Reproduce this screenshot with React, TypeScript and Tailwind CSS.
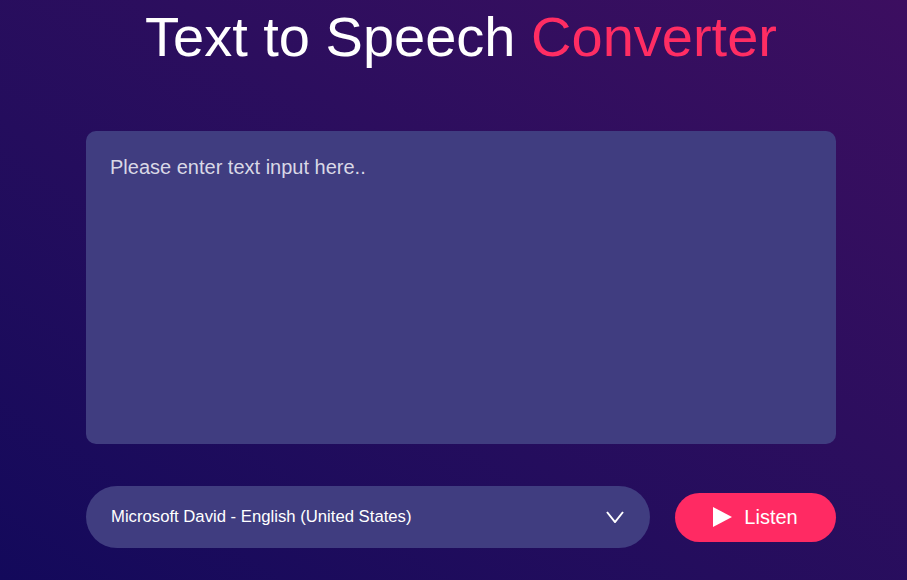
import React, { useState } from "react";

export default function App() {
  const [text, setText] = useState("");

  return (
    <div className="min-h-screen bg-gradient-to-tr from-[#13095b] to-[#3c0e60] font-['Liberation_Sans',Arial,sans-serif]">
      <div className="ml-[86px] w-[750px] pt-[5px]">
        <h1 className="text-center text-[56px] leading-[64px] text-white">
          Text to Speech <span className="text-[#ff2d63]">Converter</span>
        </h1>

        <textarea
          value={text}
          onChange={(e) => setText(e.target.value)}
          placeholder="Please enter text input here.."
          className="mt-[62px] block h-[313px] w-full resize-none rounded-[10px] bg-[#403d80] px-[24px] pt-[25px] text-[20px] leading-[23px] text-white outline-none placeholder:text-[#d9d8e6]"
        />

        <div className="mt-[42px] flex items-center justify-between">
          <button className="flex h-[62px] w-[564px] items-center justify-between rounded-full bg-[#403d80] pl-[25px] pr-[26px] text-[16.7px] text-white">
            <span>Microsoft David - English (United States)</span>
            <svg width="18" height="12" viewBox="0 0 18 12" fill="none">
              <path d="M1 1l8 10 8-10" stroke="white" strokeWidth="2" />
            </svg>
          </button>

          <button className="flex h-[49px] w-[161px] items-center justify-center gap-[12px] rounded-full bg-[#ff2a63] text-[20px] text-white">
            <svg width="19" height="20" viewBox="0 0 19 20">
              <polygon points="0,0 19,10 0,20" fill="white" />
            </svg>
            <span>Listen</span>
          </button>
        </div>
      </div>
    </div>
  );
}
